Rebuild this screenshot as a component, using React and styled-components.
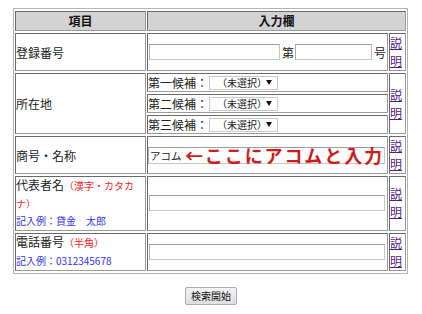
import React from "react";
import styled, { createGlobalStyle } from "styled-components";

const GlobalStyle = createGlobalStyle`
  body {
    margin: 8px;
    background: #fff;
    color: #222;
    font-family: "Noto Sans CJK JP", "Noto Sans", sans-serif;
  }
`;

const Table = styled.table`
  width: 395px;
  margin-left: 5px;
  border: 1px solid #b4b4b4;
  border-spacing: 1px 2px;
  font-size: 12px;
  line-height: 17px;
`;

const Cell = styled.td`
  border: 1px solid;
  border-color: #6a6a6a #9a9a9a #9a9a9a #6a6a6a;
  padding: 0;
  vertical-align: middle;
`;

const HeadCell = styled.th`
  border: 1px solid;
  border-color: #6a6a6a #9a9a9a #9a9a9a #6a6a6a;
  background: #d3d3d3;
  padding: 0;
  font-weight: bold;
  text-align: center;
  line-height: 18px;
  color: #111;
`;

const LabelCell = styled(Cell)`
  width: 129px;
  line-height: ${(p) => (p.$dense ? "16.5px" : "17px")};
`;

const HelpCell = styled(Cell)`
  width: 15px;
  line-height: 18px;
`;

const HelpLink = styled.a`
  color: #551a8b;
  text-decoration: underline;
`;

const Line = styled.div`
  display: flex;
  align-items: center;
  padding-left: ${(p) => (p.$flush ? 0 : 1)}px;
`;

const TextBox = styled.input`
  width: ${(p) => p.$w}px;
  height: ${(p) => p.$h || 16}px;
  box-sizing: border-box;
  margin: 0;
  padding: 0 1px;
  border: 1px solid #c4c4c4;
  border-top-color: #9c9c9c;
  border-left-color: #acacac;
  background: #fff;
  font-family: inherit;
  font-size: 10.5px;
  color: #222;
  outline: none;
`;

const Unit = styled.span`
  margin: 0 1px 0 2px;
`;

const Select = styled.span`
  display: inline-flex;
  align-items: center;
  justify-content: space-between;
  box-sizing: border-box;
  width: 69px;
  height: 14px;
  margin-left: 1px;
  padding: 0 5px 0 7px;
  border: 1px solid #c8c8c8;
  background: #fff;
  font-size: 10px;
  line-height: 12px;
`;

const Caret = styled.span`
  width: 0;
  height: 0;
  border-left: 3px solid transparent;
  border-right: 3px solid transparent;
  border-top: 5px solid #111;
`;

const NoteWrap = styled.div`
  position: relative;
  display: flex;
`;

const Note = styled.span`
  position: absolute;
  left: 37px;
  top: -3px;
  color: #d21a1a;
  font-size: 18px;
  font-weight: bold;
  letter-spacing: 1.9px;
  line-height: 22px;
  white-space: nowrap;
`;

const Hint = styled.span`
  font-size: 10px;
  color: ${(p) => (p.$tone === "red" ? "#ff2020" : "#3030ff")};
`;

const ButtonRow = styled.div`
  display: flex;
  justify-content: center;
  margin-top: 13px;
`;

const SearchButton = styled.button`
  width: 52px;
  height: 18px;
  padding: 0;
  border: 1px solid #adadad;
  border-radius: 2px;
  background: linear-gradient(#f4f4f4, #dedede);
  font-family: inherit;
  font-size: 10px;
  line-height: 14px;
  color: #111;
`;

const picks = ["第一候補：", "第二候補：", "第三候補："];

function Help({ rows }) {
  return (
    <HelpCell rowSpan={rows}>
      <HelpLink href="#">説明</HelpLink>
    </HelpCell>
  );
}

export default function App() {
  return (
    <>
      <GlobalStyle />
      <Table>
        <thead>
          <tr>
            <HeadCell>項目</HeadCell>
            <HeadCell colSpan={2}>入力欄</HeadCell>
          </tr>
        </thead>
        <tbody>
          <tr>
            <LabelCell>登録番号</LabelCell>
            <Cell>
              <Line>
                <TextBox $w={131} readOnly />
                <Unit>第</Unit>
                <TextBox $w={77} readOnly />
                <Unit>号</Unit>
              </Line>
            </Cell>
            <Help />
          </tr>
          {picks.map((label, i) => (
            <tr key={label}>
              {i === 0 && <LabelCell rowSpan={3}>所在地</LabelCell>}
              <Cell>
                <Line $flush>
                  {label}
                  <Select>
                    （未選択）
                    <Caret />
                  </Select>
                </Line>
              </Cell>
              {i === 0 && <Help rows={3} />}
            </tr>
          ))}
          <tr>
            <LabelCell>商号・名称</LabelCell>
            <Cell>
              <NoteWrap>
                <TextBox $w={237} $h={17} defaultValue="アコム" readOnly />
                <Note>←ここにアコムと入力</Note>
              </NoteWrap>
            </Cell>
            <Help />
          </tr>
          <tr>
            <LabelCell $dense>
              代表者名<Hint $tone="red">（漢字・カタカナ）</Hint>
              <br />
              <Hint>記入例：貸金　太郎</Hint>
            </LabelCell>
            <Cell>
              <Line>
                <TextBox $w={236} readOnly />
              </Line>
            </Cell>
            <Help />
          </tr>
          <tr>
            <LabelCell $dense>
              電話番号<Hint $tone="red">（半角）</Hint>
              <br />
              <Hint>記入例：0312345678</Hint>
            </LabelCell>
            <Cell>
              <Line>
                <TextBox $w={236} readOnly />
              </Line>
            </Cell>
            <Help />
          </tr>
        </tbody>
      </Table>
      <ButtonRow>
        <SearchButton>検索開始</SearchButton>
      </ButtonRow>
    </>
  );
}
